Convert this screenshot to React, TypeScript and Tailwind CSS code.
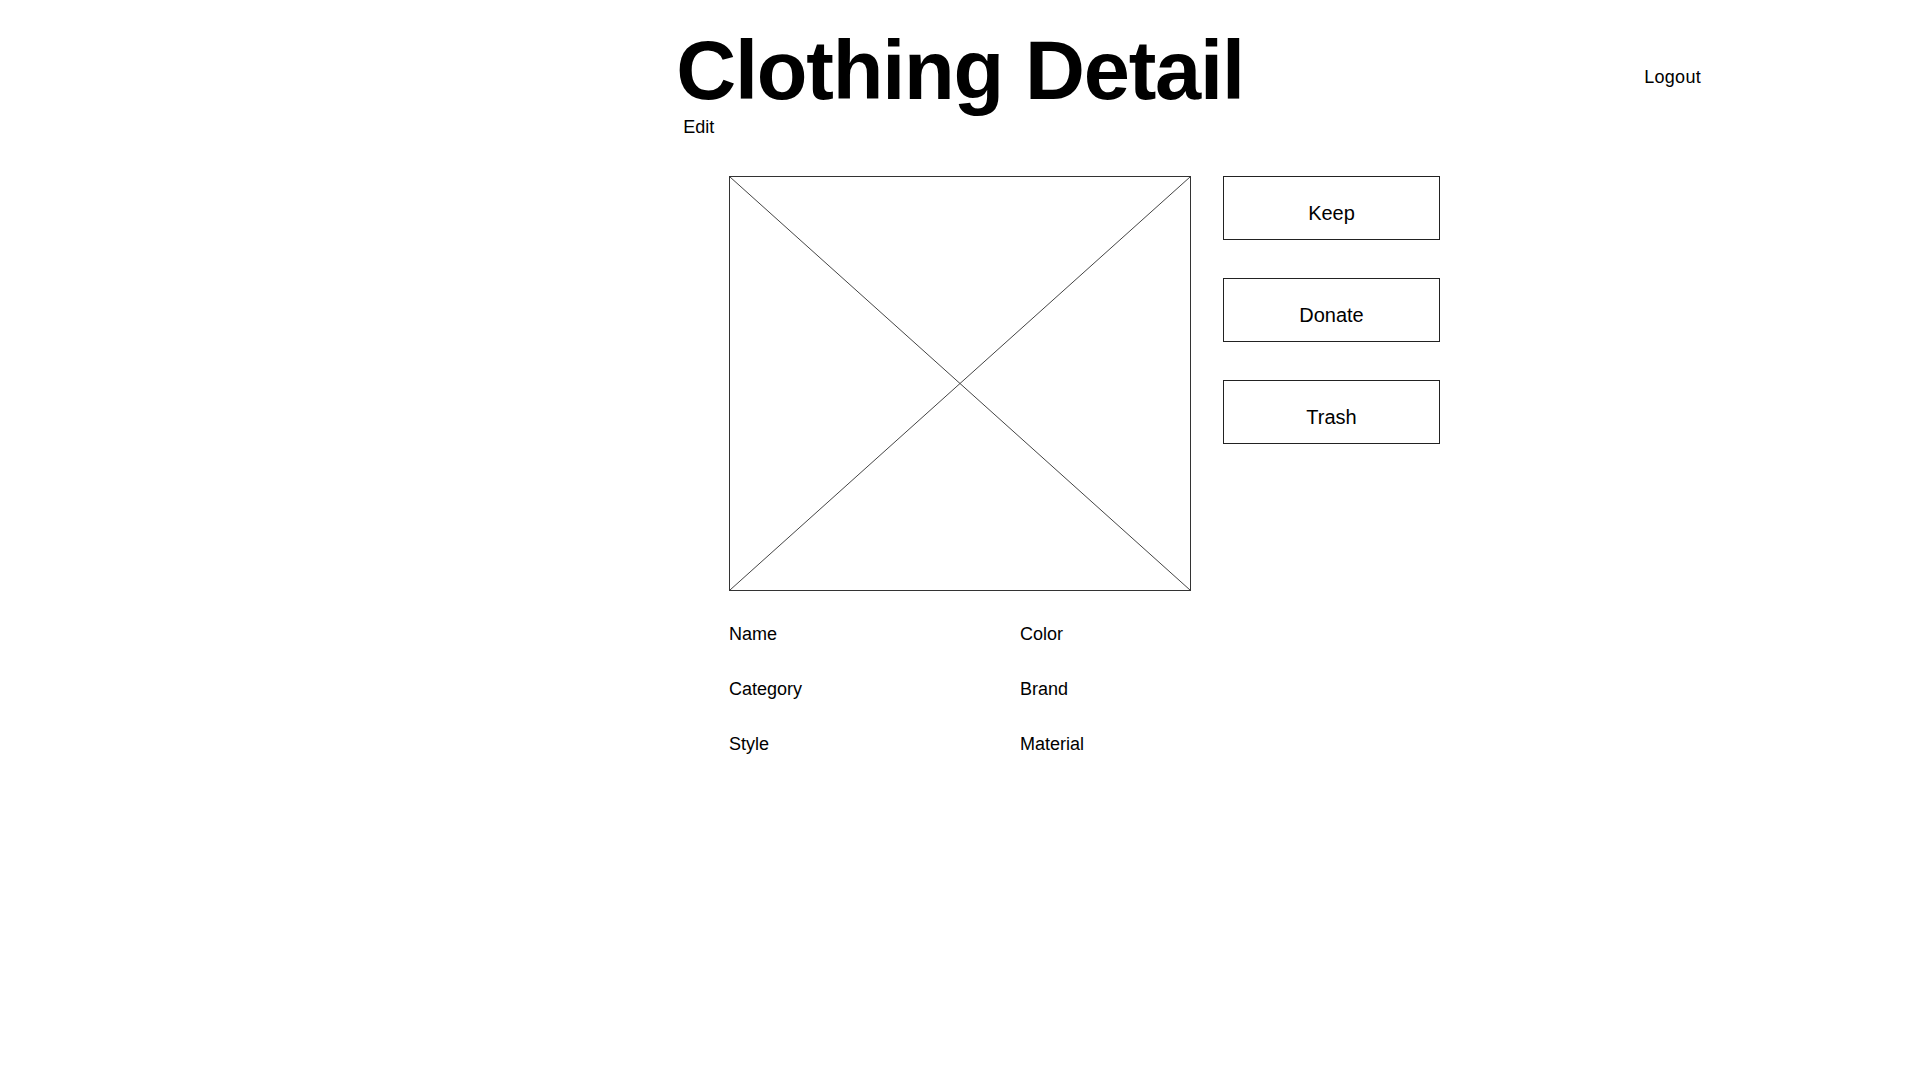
const actions = ["Keep", "Donate", "Trash"];

const fields = [
    ["Name", "Color"],
    ["Category", "Brand"],
    ["Style", "Material"],
];

const App = () => {
    return (
        <div className="min-h-screen w-full bg-white text-black font-['Liberation_Sans',Arial,sans-serif]">
            {/* HEADER */}
            <header className="grid grid-cols-[1fr_auto_1fr]">
                <div></div>
                <div className="pt-[29px]">
                    <h1 className="text-[83px] font-bold leading-none tracking-[-1.2px]">Clothing Detail</h1>
                    <a className="block ml-[7px] mt-[5px] text-[18px] leading-[20px] cursor-pointer">Edit</a>
                </div>
                <div className="flex justify-end items-start">
                    <button className="mt-[67px] mr-[219px] text-[18px] leading-[20px] tracking-[0.3px]">Logout</button>
                </div>
            </header>

            {/* DETAIL */}
            <main className="pl-[729px] mt-[39px]">
                <div className="flex items-start gap-[32px]">
                    <div className="w-[462px] h-[415px] border border-[#333]">
                        <svg className="w-full h-full block" viewBox="0 0 460 413" preserveAspectRatio="none">
                            <line x1="0" y1="0" x2="460" y2="413" stroke="#444" strokeWidth="1" vectorEffect="non-scaling-stroke"/>
                            <line x1="460" y1="0" x2="0" y2="413" stroke="#444" strokeWidth="1" vectorEffect="non-scaling-stroke"/>
                        </svg>
                    </div>
                    <div className="flex flex-col gap-[38px]">
                        {actions.map((label) => (
                            <button key={label}
                                    className="w-[217px] h-[64px] border border-[#222] text-[20px] leading-[20px] pt-[9px] text-center">
                                {label}
                            </button>
                        ))}
                    </div>
                </div>

                {/* FIELDS */}
                <div className="grid grid-cols-[291px_auto] gap-y-[35px] mt-[33px] text-[18px] leading-[20px]">
                    {fields.map(([left, right]) => (
                        <>
                            <div key={left}>{left}</div>
                            <div key={right}>{right}</div>
                        </>
                    ))}
                </div>
            </main>
        </div>
    );
};

export default App;
